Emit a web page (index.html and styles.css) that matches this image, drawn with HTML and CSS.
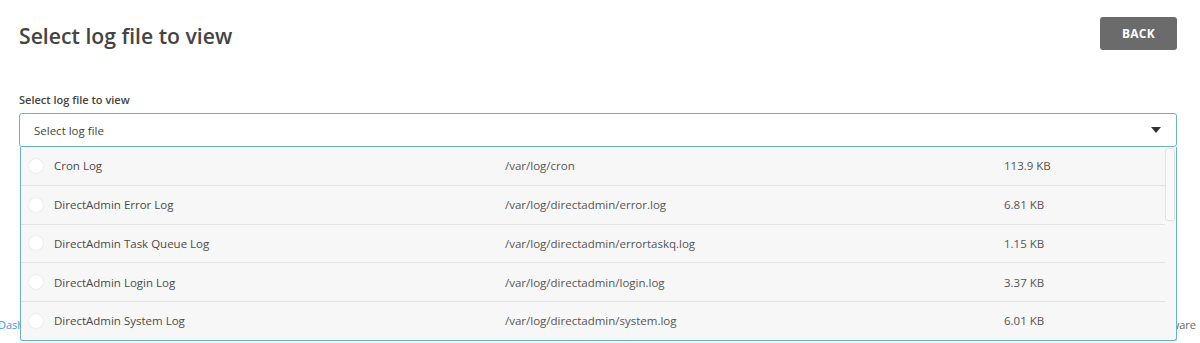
FILE: index.html
```html
<!DOCTYPE html>
<html lang="en">
  <head>
    <meta charset="UTF-8" />
    <meta name="viewport" content="width=device-width, initial-scale=1.0" />
    <title>Select log file to view</title>
    <link rel="stylesheet" href="styles.css">
  </head>
  <body>
    <div class="page">
      <div class="header">
        <h1>Select log file to view</h1>
        <button class="back">BACK</button>
      </div>

      <div class="field">
        <label class="label">Select log file to view</label>
        <div class="select-wrap">
          <div class="select">
            <span>Select log file</span>
            <span class="caret"></span>
          </div>
          <div class="dropdown">
            <div class="rows">
              <div class="row">
                <span class="name"><span class="radio"></span>Cron Log</span>
                <span class="path">/var/log/cron</span>
                <span class="size">113.9 KB</span>
              </div>
              <div class="row">
                <span class="name"><span class="radio"></span>DirectAdmin Error Log</span>
                <span class="path">/var/log/directadmin/error.log</span>
                <span class="size">6.81 KB</span>
              </div>
              <div class="row">
                <span class="name"><span class="radio"></span>DirectAdmin Task Queue Log</span>
                <span class="path">/var/log/directadmin/errortaskq.log</span>
                <span class="size">1.15 KB</span>
              </div>
              <div class="row">
                <span class="name"><span class="radio"></span>DirectAdmin Login Log</span>
                <span class="path">/var/log/directadmin/login.log</span>
                <span class="size">3.37 KB</span>
              </div>
              <div class="row">
                <span class="name"><span class="radio"></span>DirectAdmin System Log</span>
                <span class="path">/var/log/directadmin/system.log</span>
                <span class="size">6.01 KB</span>
              </div>
            </div>
            <div class="scrollbar"><div class="thumb"></div></div>
          </div>
        </div>
      </div>
    </div>

    <div class="footer">
      <a href="#" class="crumb">Dashboard</a>
      <span class="vendor">Software</span>
    </div>
  </body>
</html>
```

FILE: styles.css
```css
body {
  margin: 0;
  font-family: "Open Sans", "Liberation Sans", sans-serif;
  color: #555;
  background-color: #fff;
  height: 343px;
  overflow: hidden;
}

.page {
  padding: 17px 23px 0 19px;
}

.header {
  display: flex;
  justify-content: space-between;
  align-items: flex-start;
  height: 75px;
}

h1 {
  margin: 4px 0 0;
  font-size: 21.2px;
  font-weight: 600;
  color: #444;
}

.back {
  width: 77px;
  height: 33px;
  border: none;
  border-radius: 3px;
  background-color: #6b6b6b;
  color: #fff;
  font-family: inherit;
  font-size: 12px;
  font-weight: 700;
  letter-spacing: 0.3px;
  cursor: pointer;
}

.label {
  display: block;
  font-size: 11px;
  font-weight: 600;
  color: #444;
  margin-bottom: 6px;
}

.select-wrap {
  position: relative;
}

.select {
  height: 32px;
  border: 1px solid #69b5bb;
  border-radius: 3px;
  display: flex;
  align-items: center;
  justify-content: space-between;
  padding: 0 15px 0 14px;
  font-size: 11.5px;
  color: #444;
}

.caret {
  width: 0;
  height: 0;
  border-left: 5px solid transparent;
  border-right: 5px solid transparent;
  border-top: 6px solid #333;
}

.dropdown {
  position: absolute;
  top: 34px;
  left: 1px;
  right: 0;
  display: flex;
  background-color: #f7f7f7;
  border: 1px solid #69b5bb;
  border-top: none;
  border-radius: 0 0 3px 3px;
  box-shadow: 0 2px 6px rgba(0, 0, 0, 0.06);
}

.rows {
  flex: 1;
}

.row {
  display: grid;
  grid-template-columns: 484px 499px 1fr;
  align-items: center;
  height: 37.75px;
  border-bottom: 1px solid #e3e3e3;
  font-size: 11.5px;
  color: #555;
}

.row:last-child {
  border-bottom: none;
}

.name {
  display: flex;
  align-items: center;
  padding-left: 8px;
  color: #4a4a4a;
}

.radio {
  width: 14px;
  height: 14px;
  border-radius: 50%;
  background-color: #fff;
  box-shadow: 0 0 2px rgba(0, 0, 0, 0.12);
  margin-right: 11px;
}

.scrollbar {
  width: 10px;
  padding: 1px 1px 0 0;
}

.thumb {
  height: 71px;
  border: 1px solid #e2e2e2;
  border-radius: 3px;
  background-color: #fafafa;
}

.footer {
  display: flex;
  justify-content: space-between;
  margin-top: 170px;
  padding: 0 4px 0 0;
  font-size: 11px;
}

.crumb {
  color: #3b9bd4;
  text-decoration: none;
  margin-left: -2px;
}

.vendor {
  color: #666;
}
```
